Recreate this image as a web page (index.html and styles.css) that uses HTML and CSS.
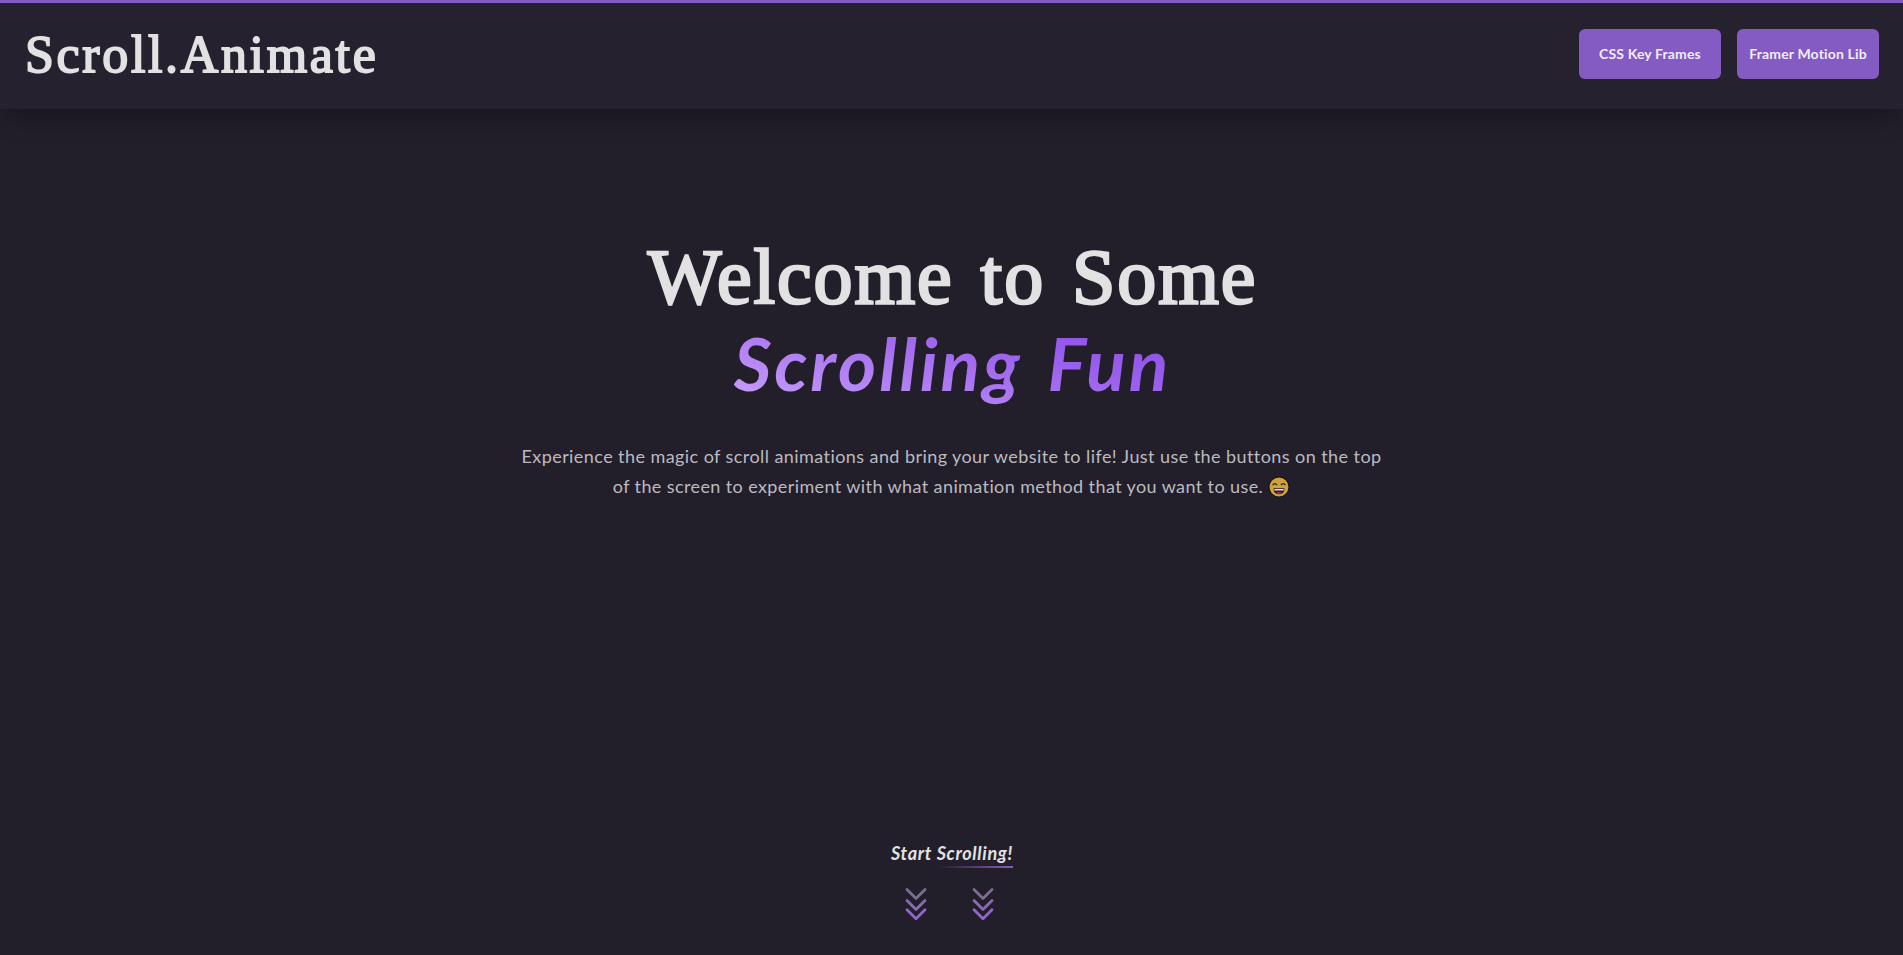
FILE: index.html
```html
<!DOCTYPE html>
<html lang="en">
<head>
<meta charset="utf-8">
<title>Scroll.Animate</title>
<link rel="stylesheet" href="styles.css">
</head>
<body>
<header class="header">
  <div class="logo">Scroll.Animate</div>
  <nav class="nav">
    <button class="btn btn-css">CSS Key Frames</button>
    <button class="btn btn-framer">Framer Motion Lib</button>
  </nav>
</header>
<main class="hero">
  <h1 class="title"><span class="w-welcome">Welcome</span><span class="w-to">to</span><span class="w-some">Some</span></h1>
  <h2 class="subtitle"><span class="fill">Scrolling Fun</span></h2>
  <p class="intro"><span class="line-a">Experience the magic of scroll animations and bring your website to life! Just use the buttons on the top</span><br><span class="line-b">of the screen to experiment with what animation method that you want to use.</span>
    <svg class="emoji" viewBox="0 0 20 20"><circle cx="10" cy="10" r="9.2" fill="#d0a139" stroke="#17151c" stroke-width="1.2"/><path d="M4.2 8.3Q6.2 5.7 8.2 8.3M11.8 8.3Q13.8 5.7 15.8 8.3" fill="none" stroke="#2a231c" stroke-width="1.2"/><path d="M5 11.2H15Q15 16.6 10 16.6T5 11.2Z" fill="#26202a"/><path d="M5.8 11.8H14.2V13.2H5.8Z" fill="#d8d8d8"/><path d="M7.5 15.5Q10 13.8 12.5 15.5Q10 17 7.5 15.5Z" fill="#c42b34"/></svg>
  </p>
</main>
<footer class="start">
  <div class="start-text">Start Scrolling!</div>
  <div class="arrows">
    <svg class="chevrons" viewBox="0 0 22 34"><path d="M2 2.5L11 11.5L20 2.5" stroke="#7d6d92"/><path d="M2 13.5L11 22.5L20 13.5" stroke="#8b6ab2"/><path d="M2 22.8L11 31.8L20 22.8" stroke="#9066cc"/></svg>
    <svg class="chevrons" viewBox="0 0 22 34"><path d="M2 2.5L11 11.5L20 2.5" stroke="#7d6d92"/><path d="M2 13.5L11 22.5L20 13.5" stroke="#8b6ab2"/><path d="M2 22.8L11 31.8L20 22.8" stroke="#9066cc"/></svg>
  </div>
</footer>
</body>
</html>
```
FILE: styles.css
```css
* { box-sizing: border-box; }
body {
  margin: 0;
  height: 955px;
  overflow: hidden;
  display: flex;
  flex-direction: column;
  background: #221f2b;
  color: #e2e2e3;
  font-family: Lato, sans-serif;
}
.header {
  height: 109px;
  flex: none;
  border-top: 3px solid #845ac3;
  background: #26212f;
  box-shadow: 0 14px 24px -6px rgba(0, 0, 0, 0.32);
  padding: 0 24px 4px 25px;
  display: flex;
  justify-content: space-between;
  align-items: center;
}
.logo {
  padding-top: 1px;
  font: 52px/60px "Liberation Serif", serif;
  -webkit-text-stroke: 1.8px #e2e2e3;
  letter-spacing: 2.65px;
  white-space: nowrap;
}
.nav { display: flex; gap: 16px; }
.btn {
  width: 142px;
  height: 50px;
  padding: 0 0 1px;
  border: 0;
  border-radius: 6px;
  background: #845ac3;
  color: #f2ecf8;
  font: 700 14px Lato, sans-serif;
  letter-spacing: 0.15px;
  white-space: nowrap;
}
.hero {
  flex: 1;
  padding-top: 126px;
  text-align: center;
}
.title {
  margin: 0;
  padding-left: 2px;
  display: flex;
  justify-content: center;
  gap: 27px;
  font: 78px/84px "Liberation Serif", serif;
  letter-spacing: 1.9px;
  -webkit-text-stroke: 2.6px #e2e2e3;
}
.subtitle {
  margin: -1px 0 0;
  padding-left: 2px;
  font: italic 700 73px/90px Lato, sans-serif;
  letter-spacing: 2.9px;
  word-spacing: 6px;
}
.fill {
  display: inline-block;
  background: linear-gradient(15deg, #c9a2f8 0%, #b483f4 30%, #9c62ee 62%, #8746e4 100%);
  -webkit-background-clip: text;
  background-clip: text;
  color: transparent;
}
.intro {
  margin: 33px 0 0;
  font-size: 18px;
  line-height: 30px;
  letter-spacing: 0.43px;
  color: #bcbac0;
  white-space: nowrap;
}
.line-b { letter-spacing: 0.4px; }
.emoji { width: 22px; height: 22px; vertical-align: -5px; }
.start {
  height: 113px;
  flex: none;
  display: flex;
  flex-direction: column;
  align-items: center;
}
.start-text {
  height: 26px;
  padding-left: 1px;
  font: italic 700 18px/23px Lato, sans-serif;
  letter-spacing: 0.68px;
  background: linear-gradient(90deg, transparent 38%, #845ac3 100%) left bottom / 100% 2px no-repeat;
}
.arrows { display: flex; gap: 45px; margin-top: 19px; padding-right: 5px; }
.chevrons { width: 22px; height: 34px; fill: none; stroke-width: 2.8; stroke-linecap: round; stroke-linejoin: round; }
```
